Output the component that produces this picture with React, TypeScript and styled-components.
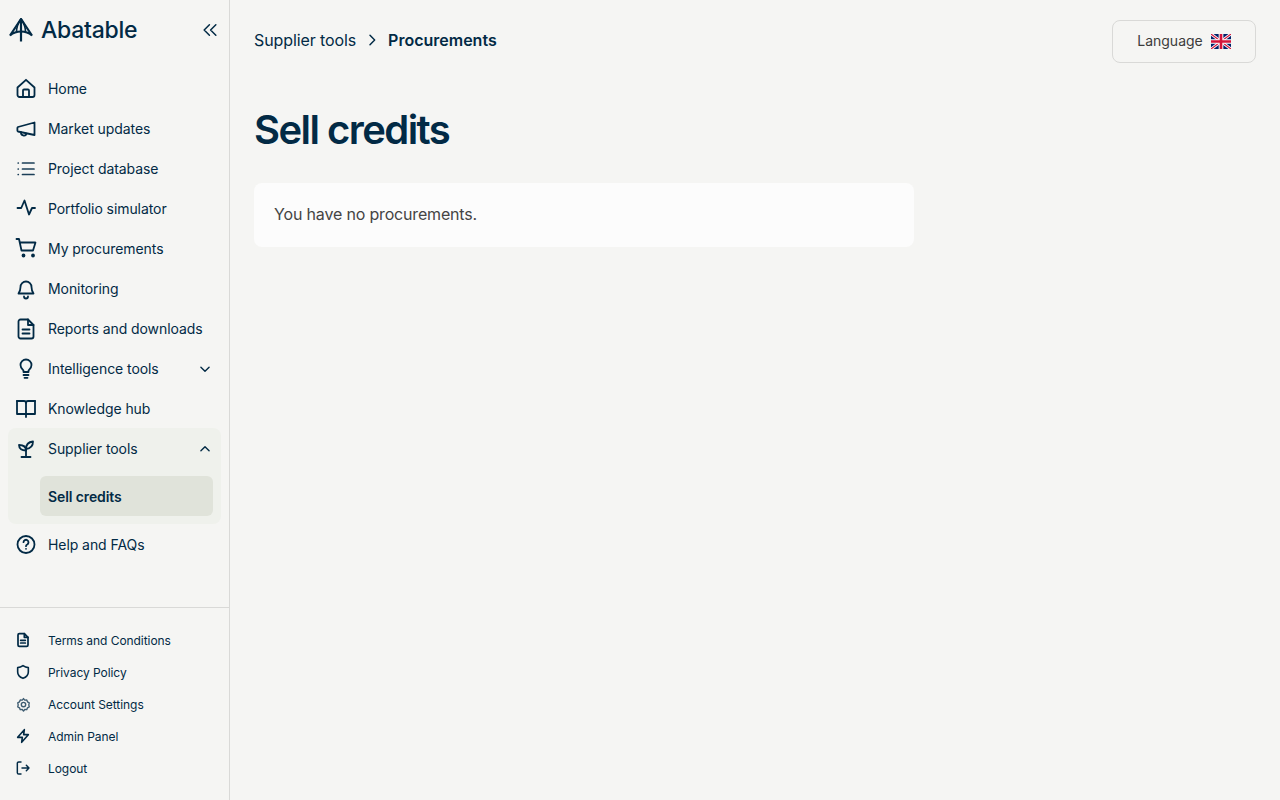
import { FC, ReactNode } from "react";
import styled, { createGlobalStyle } from "styled-components";

const navy = "#022a45";
const sans = 'Inter, "Liberation Sans", sans-serif';

const GlobalStyle = createGlobalStyle`
  html, body {
    margin: 0;
    height: 100%;
    background: #f5f5f3;
    font-family: ${sans};
    color: ${navy};
  }
`;

const Shell = styled.div`
  display: flex;
  height: 100vh;
  overflow: hidden;
`;

const Sidebar = styled.aside`
  width: 229px;
  flex: none;
  display: flex;
  flex-direction: column;
  border-right: 1px solid #d9d9d7;
`;

const Brand = styled.div`
  height: 60px;
  margin-bottom: 9px;
  padding: 0 12px 0 9px;
  display: flex;
  align-items: center;
  justify-content: space-between;
`;

const Logo = styled.div`
  display: flex;
  align-items: center;
  gap: 8px;
  font-size: 23px;
  font-weight: 500;
  letter-spacing: -0.25px;
`;

const Collapse = styled.button`
  border: 0;
  padding: 0;
  background: none;
  color: ${navy};
  display: flex;
`;

const Nav = styled.nav`
  display: flex;
  flex-direction: column;
  padding: 0 8px;
`;

const NavRow = styled.div`
  height: 40px;
  display: flex;
  align-items: center;
  padding: 0 9px 0 6px;
  font-size: 14px;
  letter-spacing: -0.07px;
  line-height: 20px;
`;

const NavIcon = styled.span`
  width: 24px;
  margin-right: 10px;
  display: flex;
  justify-content: center;
`;

const NavLabel = styled.span`
  flex: 1;
  white-space: nowrap;
`;

const Caret = styled.span`
  display: flex;
`;

const Group = styled.div`
  background: #eff1ec;
  border-radius: 8px;
  height: 96px;
  margin: -1px 0 1px;
  padding-top: 1px;
  box-sizing: border-box;
`;

const SubItem = styled.div`
  height: 40px;
  margin: 7px 8px 0 32px;
  padding: 0 8px;
  border-radius: 6px;
  background: #e0e3da;
  display: flex;
  align-items: center;
  font-size: 14px;
  letter-spacing: -0.1px;
  font-weight: 600;
`;

const Footer = styled.div`
  margin-top: auto;
  border-top: 1px solid #d9d9d7;
  padding: 16px 8px;
  display: flex;
  flex-direction: column;
`;

const FooterRow = styled.div`
  height: 32px;
  display: flex;
  align-items: center;
  padding-left: 7px;
  font-size: 12px;
  letter-spacing: -0.06px;
`;

const FooterIcon = styled.span`
  width: 16px;
  margin-right: 17px;
  display: flex;
  justify-content: center;
`;

const Main = styled.main`
  flex: 1;
  padding: 20px 24px 0;
`;

const TopBar = styled.div`
  height: 43px;
  display: flex;
  align-items: center;
  justify-content: space-between;
`;

const Crumbs = styled.div`
  display: flex;
  align-items: center;
  gap: 8px;
  padding-bottom: 3px;
  font-size: 16px;
  letter-spacing: -0.1px;
`;

const CrumbSeparator = styled.span`
  display: flex;
`;

const CrumbCurrent = styled.span`
  font-weight: 600;
  letter-spacing: 0;
`;

const LanguageButton = styled.button`
  width: 144px;
  height: 43px;
  border: 1px solid #d9d9d7;
  border-radius: 8px;
  background: transparent;
  display: flex;
  align-items: center;
  justify-content: center;
  gap: 8px;
  padding: 0 0 2px;
  color: #3c3c3c;
  font-family: ${sans};
  font-size: 14px;
`;

const Flag = styled.svg`
  margin-top: 2px;
`;

const Title = styled.h1`
  margin: 42px 0 28px;
  font-size: 40px;
  line-height: 50px;
  font-weight: 600;
  letter-spacing: -1.55px;
`;

const Card = styled.div`
  width: 660px;
  height: 64px;
  box-sizing: border-box;
  padding: 0 20px 2px;
  border-radius: 8px;
  background: #fcfcfc;
  display: flex;
  align-items: center;
  color: #444;
  font-size: 16px;
  letter-spacing: -0.17px;
`;

const Glyph: FC<{ size?: number; width?: number; color?: string; children: ReactNode }> = ({
  size = 24,
  width = 1.8,
  color = navy,
  children,
}) => (
  <svg
    width={size}
    height={size}
    viewBox="0 0 24 24"
    fill="none"
    stroke={color}
    strokeWidth={width}
    strokeLinecap="round"
    strokeLinejoin="round"
  >
    {children}
  </svg>
);

const LogoMark: FC = () => (
  <svg width="24" height="24" viewBox="0 0 24 24" fill="none" stroke={navy} strokeWidth="2.2">
    <path d="M12 1 L1 17.5 C4.5 14.5 8 13.5 12 13.5 C16 13.5 19.500 14.5 23 17.5 Z" />
    <path d="M12 1 V23.5" />
    <path d="M12 1 C8.8 5.5 7.500 9.500 7.500 14 M12 1 C15.2 5.5 16.500 9.500 16.500 14" strokeWidth="1.6" />
  </svg>
);

const UkFlag: FC = () => (
  <Flag width="20" height="15" viewBox="0 0 60 45">
    <rect width="60" height="45" fill="#012169" />
    <path d="M0 0 L60 45 M60 0 L0 45" stroke="#fff" strokeWidth="9" />
    <path d="M0 0 L60 45 M60 0 L0 45" stroke="#d4143a" strokeWidth="3.5" />
    <path d="M30 0 V45 M0 22.5 H60" stroke="#fff" strokeWidth="14" />
    <path d="M30 0 V45 M0 22.5 H60" stroke="#d4143a" strokeWidth="8" />
  </Flag>
);

const DocPaths: FC = () => (
  <>
    <path d="M4.5 4.5a2 2 0 0 1 2-2H14L19.5 8v11.5a2 2 0 0 1-2 2h-11a2 2 0 0 1-2-2Z" />
    <path d="M14 2.5V8h5.5M8.5 12.5H15.5M8.5 16.5H15.5" />
  </>
);

const icons = {
  home: (
    <Glyph>
      <path d="M3.5 10.5 12 2.8l8.5 7.7V18a2 2 0 0 1-2 2h-13a2 2 0 0 1-2-2Z" />
      <path d="M9 20v-6.5a1 1 0 0 1 1-1h4a1 1 0 0 1 1 1V20" />
    </Glyph>
  ),
  market: (
    <Glyph>
      <path d="M4 10 20.5 5.5v12.5L4 14.5a1.2 1.2 0 0 1-.6-1V11a1.2 1.2 0 0 1 .6-1Z" />
      <path d="M7 15.200a2.900 2.900 0 0 0 5.600 1.400" />
    </Glyph>
  ),
  list: (
    <Glyph width={1.7} color="#1b3f58">
      <path d="M8.5 6H20M8.5 12H20M8.5 17.5H20" />
      <path d="M4.2 6h.1M4.2 12h.1M4.2 17.5h.1" />
    </Glyph>
  ),
  pulse: (
    <Glyph>
      <path d="M3.5 11h3.7l3.3-7.5 4.5 14 3-6.5h3" />
    </Glyph>
  ),
  cart: (
    <Glyph>
      <path d="M2.5 2H5l2.5 11.5H19L21.5 5.5H5.8" />
      <circle cx="9.5" cy="18.5" r="1" fill={navy} />
      <circle cx="19" cy="18.5" r="1" fill={navy} />
    </Glyph>
  ),
  bell: (
    <Glyph>
      <path d="M6.5 10a5.5 5.5 0 0 1 11 0c0 3 .6 4.5 2 6.5h-15c1.4-2 2-3.5 2-6.5Z" />
      <path d="M10 19.5a2 2 0 0 0 4 0" />
    </Glyph>
  ),
  doc: (
    <Glyph>
      <DocPaths />
    </Glyph>
  ),
  bulb: (
    <Glyph>
      <path d="M9.5 15v-1.3C9.5 12.8 6.5 11.5 6.5 8a5.5 5.5 0 0 1 11 0c0 3.5-3 4.8-3 5.700V15Z" />
      <path d="M9.5 18h5M10.5 20.8h3" />
    </Glyph>
  ),
  book: (
    <Glyph>
      <path d="M3 4h7a2 2 0 0 1 2 2v14" />
      <path d="M21 4h-7a2 2 0 0 0-2 2" />
      <path d="M3 4v13h9M21 4v13h-9" />
    </Glyph>
  ),
  sprout: (
    <Glyph>
      <path d="M7.5 20h9M12 20v-8" />
      <path d="M5 8c4 0 7 1.5 7 5.5-4 0-7-1.5-7-5.5Z" />
      <path d="M12 12c0-4.5 2.5-7 7-7.5 0 4.5-2.5 7-7 7.5Z" />
    </Glyph>
  ),
  help: (
    <Glyph>
      <circle cx="12" cy="11.5" r="8.5" />
      <path d="M9.5 9.2a2.5 2.5 0 1 1 3.7 2.3c-.8.4-1.2.9-1.2 1.7" />
      <path d="M12 15.8h.01" />
    </Glyph>
  ),
  chevronDown: (
    <Glyph size={14} width={2.4}>
      <path d="M5 9l7 7 7-7" />
    </Glyph>
  ),
  chevronUp: (
    <Glyph size={14} width={2.4}>
      <path d="M5 15l7-7 7 7" />
    </Glyph>
  ),
  chevronRight: (
    <Glyph size={16} width={2.2}>
      <path d="M9 5l7 7-7 7" />
    </Glyph>
  ),
  collapse: (
    <Glyph size={14} width={2.6}>
      <path d="M11 3l-9 9 9 9M22 3l-9 9 9 9" />
    </Glyph>
  ),
};

const footerIcons = {
  doc: (
    <Glyph size={16} width={2.6}>
      <DocPaths />
    </Glyph>
  ),
  shield: (
    <Glyph size={16} width={2.4}>
      <path d="M12 2.5c2.5 1.8 5 2.8 8 3V12c0 4.5-3 7.8-8 9.5-5-1.7-8-5-8-9.5V5.5c3-.2 5.5-1.200 8-3Z" />
    </Glyph>
  ),
  gear: (
    <Glyph size={15} width={2.2} color="#3e5c71">
      <path d="M12 2.5l2 2.5 3.2-.3 1.2 3 2.800 1.600-.7 3.200.7 3.200-2.800 1.600-1.200 3-3.200-.3-2 2.500-2-2.500-3.200.3-1.200-3-2.800-1.600.7-3.200-.7-3.200 2.800-1.600 1.200-3 3.200.3Z" />
      <circle cx="12" cy="12" r="3.5" />
    </Glyph>
  ),
  bolt: (
    <Glyph size={16} width={2.4}>
      <path d="M14 2.5 4 14h7l-1 7.5L20 10h-7Z" />
    </Glyph>
  ),
  logout: (
    <Glyph size={16} width={2.2}>
      <path d="M9 3H5.5a2 2 0 0 0-2 2v14a2 2 0 0 0 2 2H9" />
      <path d="M10.5 12H21M17 8l4 4-4 4" />
    </Glyph>
  ),
};

interface NavItem {
  label: string;
  icon: ReactNode;
  caret?: ReactNode;
}

const navTop: NavItem[] = [
  { label: "Home", icon: icons.home },
  { label: "Market updates", icon: icons.market },
  { label: "Project database", icon: icons.list },
  { label: "Portfolio simulator", icon: icons.pulse },
  { label: "My procurements", icon: icons.cart },
  { label: "Monitoring", icon: icons.bell },
  { label: "Reports and downloads", icon: icons.doc },
  { label: "Intelligence tools", icon: icons.bulb, caret: icons.chevronDown },
  { label: "Knowledge hub", icon: icons.book },
];

const footerItems: NavItem[] = [
  { label: "Terms and Conditions", icon: footerIcons.doc },
  { label: "Privacy Policy", icon: footerIcons.shield },
  { label: "Account Settings", icon: footerIcons.gear },
  { label: "Admin Panel", icon: footerIcons.bolt },
  { label: "Logout", icon: footerIcons.logout },
];

const Row: FC<NavItem> = ({ label, icon, caret }) => (
  <NavRow>
    <NavIcon>{icon}</NavIcon>
    <NavLabel>{label}</NavLabel>
    {caret && <Caret>{caret}</Caret>}
  </NavRow>
);

const App: FC = () => (
  <>
    <GlobalStyle />
    <Shell>
      <Sidebar>
        <Brand>
          <Logo>
            <LogoMark />
            Abatable
          </Logo>
          <Collapse>{icons.collapse}</Collapse>
        </Brand>
        <Nav>
          {navTop.map((item) => (
            <Row key={item.label} {...item} />
          ))}
          <Group>
            <Row label="Supplier tools" icon={icons.sprout} caret={icons.chevronUp} />
            <SubItem>Sell credits</SubItem>
          </Group>
          <Row label="Help and FAQs" icon={icons.help} />
        </Nav>
        <Footer>
          {footerItems.map((item) => (
            <FooterRow key={item.label}>
              <FooterIcon>{item.icon}</FooterIcon>
              {item.label}
            </FooterRow>
          ))}
        </Footer>
      </Sidebar>
      <Main>
        <TopBar>
          <Crumbs>
            <span>Supplier tools</span>
            <CrumbSeparator>{icons.chevronRight}</CrumbSeparator>
            <CrumbCurrent>Procurements</CrumbCurrent>
          </Crumbs>
          <LanguageButton>
            Language
            <UkFlag />
          </LanguageButton>
        </TopBar>
        <Title>Sell credits</Title>
        <Card>You have no procurements.</Card>
      </Main>
    </Shell>
  </>
);

export default App;
